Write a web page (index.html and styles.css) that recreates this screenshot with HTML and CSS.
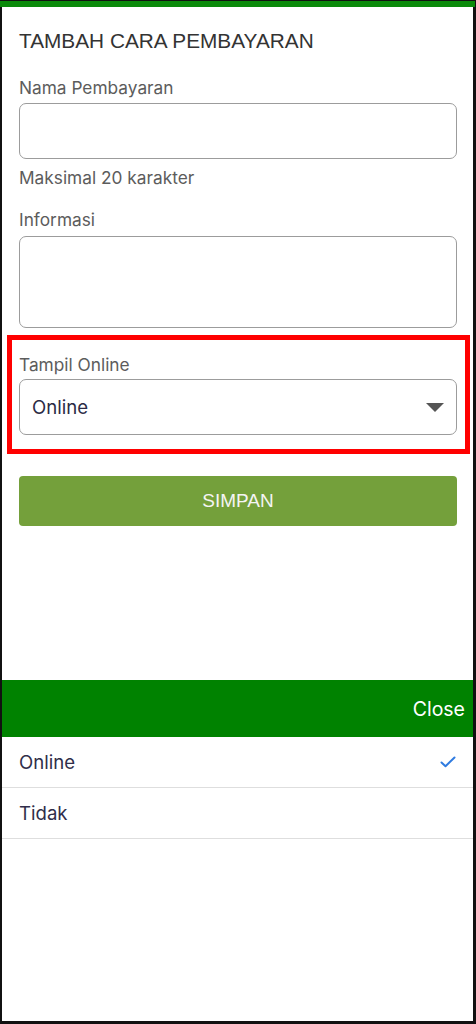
FILE: index.html
```html
<!DOCTYPE html>
<html>
	<head>
		<meta charset="UTF-8">
		<title>Tambah Cara Pembayaran</title>
		<link rel="stylesheet" href="styles.css">
	</head>
	<body>
		<div class="screen">
			<div class="topbar"></div>
			<div class="form">
				<h1 class="title">TAMBAH CARA PEMBAYARAN</h1>
				<div class="field">
					<label class="label">Nama Pembayaran</label>
					<div class="input"></div>
				</div>
				<p class="hint">Maksimal 20 karakter</p>
				<div class="field field-info">
					<label class="label">Informasi</label>
					<div class="input textarea"></div>
				</div>
				<div class="highlight">
					<label class="label">Tampil Online</label>
					<div class="select">
						<span>Online</span>
						<svg class="caret" width="18" height="10" viewBox="0 0 18 10"><path d="M0 0H18L9 9Z" fill="#555"/></svg>
					</div>
				</div>
				<button class="save">SIMPAN</button>
			</div>
			<div class="sheet">
				<div class="sheet-head"><span class="close">Close</span></div>
				<ul class="options">
					<li class="option">
						<span>Online</span>
						<svg class="check" width="16" height="12" viewBox="0 0 16 12"><path d="M1.5 6.5L5.5 10.2L14.5 1.5" fill="none" stroke="#2f7be0" stroke-width="2" stroke-linecap="round" stroke-linejoin="round"/></svg>
					</li>
					<li class="option"><span>Tidak</span></li>
				</ul>
			</div>
		</div>
	</body>
</html>
```

FILE: styles.css
```css
*{
	padding: 0;
	margin: 0;
	box-sizing: border-box;
}
html, body{
	width: 476px;
	height: 1024px;
	background-color: #111;
}
.screen{
	width: 476px;
	height: 1024px;
	border-left: 2px solid #111;
	border-right: 3px solid #111;
	border-top: 1px solid #111;
	border-bottom: 3px solid #111;
	background-color: #fff;
	display: flex;
	flex-direction: column;
	font-family: Inter, "Noto Sans", sans-serif;
}
.topbar{
	height: 6px;
	background-color: #0a8a0a;
	margin: 0 -2px 0 -2px;
}
.form{
	padding: 22px 16px 0 17px;
	display: flex;
	flex-direction: column;
}
.title{
	font-family: "Liberation Sans", Arial, sans-serif;
	font-weight: normal;
	font-size: 20.8px;
	line-height: 24px;
	color: #333;
	margin-bottom: 25px;
}
.field{
	display: flex;
	flex-direction: column;
	gap: 5px;
}
.label{
	font-size: 17.3px;
	line-height: 20px;
	color: #5c5c5c;
}
.input{
	height: 56px;
	border: 1px solid #9c9c9c;
	border-radius: 7px;
}
.textarea{
	height: 92px;
}
.hint{
	font-size: 17.3px;
	line-height: 20px;
	color: #5c5c5c;
	margin-top: 9px;
}
.field-info{
	margin-top: 22px;
	gap: 6px;
}
/*框出下拉选择*/
.highlight{
	margin: 7px -13px 0 -12px;
	border: 5px solid #f00;
	padding: 15px 8px 14px 7px;
	display: flex;
	flex-direction: column;
	gap: 4px;
}
.select{
	height: 56px;
	border: 1px solid #9c9c9c;
	border-radius: 7px;
	display: flex;
	align-items: center;
	justify-content: space-between;
	padding: 0 12px 0 12px;
	font-size: 18.6px;
	color: #2b2a45;
}
.caret{
	margin-top: 2px;
}
.save{
	margin-top: 22px;
	height: 50px;
	border: none;
	border-radius: 4px;
	background-color: #74a03b;
	color: #f4f4f4;
	font-family: "Liberation Sans", Arial, sans-serif;
	font-size: 19px;
}
.sheet{
	margin-top: auto;
	height: 341px;
}
.sheet-head{
	height: 57px;
	background-color: #008200;
	display: flex;
	align-items: center;
	justify-content: flex-end;
	padding-right: 8px;
}
.close{
	font-size: 19.5px;
	color: #fff;
}
.options{
	list-style: none;
}
.option{
	height: 51px;
	border-bottom: 1px solid #dedede;
	display: flex;
	align-items: center;
	justify-content: space-between;
	padding: 0 17px 0 17px;
	font-size: 18.6px;
	color: #302e4a;
}
```
